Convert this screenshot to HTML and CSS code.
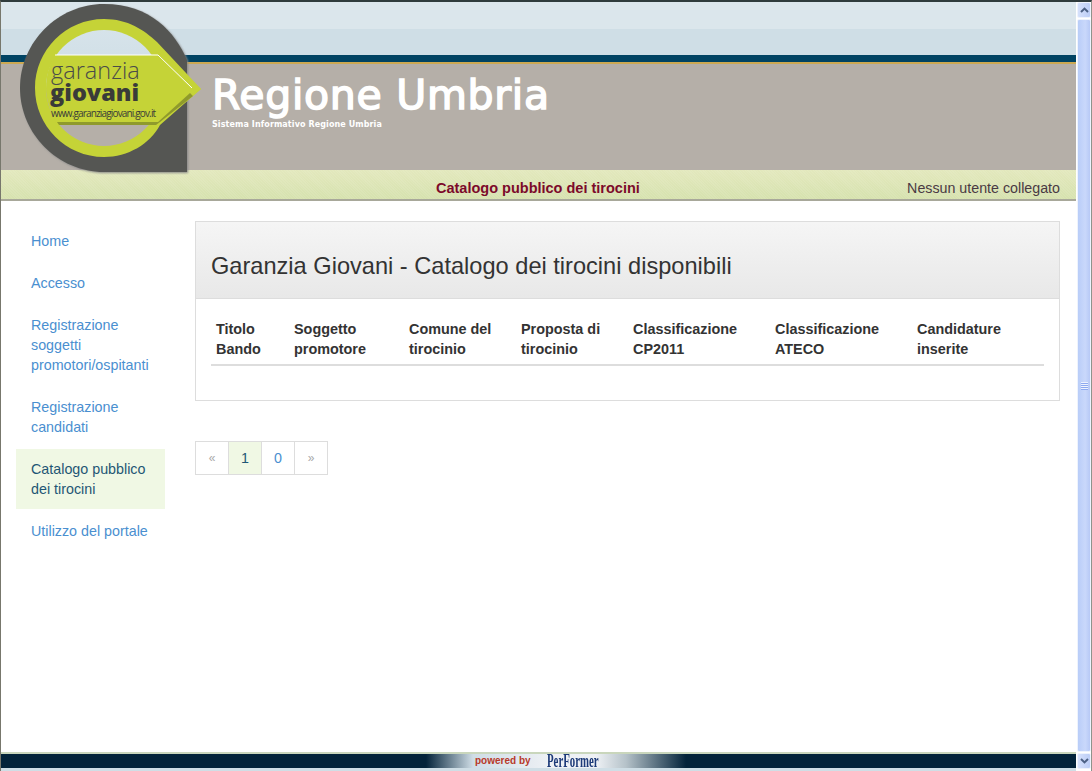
FILE: index.html
```html
<!DOCTYPE html>
<html lang="it">
<head>
  <meta charset="UTF-8">
  <title>Catalogo pubblico dei tirocini</title>
  <link rel="stylesheet" href="styles.css">
</head>
<body>
  <div class="window">
    <div class="page">
      <!-- Header -->
      <header class="site-header">
        <svg class="logo" viewBox="0 0 190 176" width="190" height="176">
          <defs>
            <filter id="soft" x="-10%" y="-10%" width="120%" height="120%">
              <feGaussianBlur stdDeviation="1.2"/>
            </filter>
            <linearGradient id="inner" x1="0" y1="0" x2="0" y2="1">
              <stop offset="0" stop-color="#d6e3ea"/>
              <stop offset="0.5" stop-color="#cddde5"/>
              <stop offset="0.5" stop-color="#b5afa8"/>
              <stop offset="1" stop-color="#b5afa8"/>
            </linearGradient>
          </defs>
          <path d="M84 4C130 4 155 32 167 60V172H84C38 172 0 134 0 88S38 4 84 4Z" fill="#888" filter="url(#soft)" transform="translate(1 1)"/>
          <path d="M84 4C130 4 155 32 167 60V172H84C38 172 0 134 0 88S38 4 84 4Z" fill="#555653"/>
          <path d="M84 19C108 19 124 30 137 42L181 89 140 125C130 144 108 157 84 157 46 157 15 126 15 88S46 19 84 19Z" fill="#c5d337"/>
          <circle cx="84" cy="88" r="58" fill="url(#inner)"/>
          <path d="M35 55H138L181 89 138 125H37C31 113 26 100 26 88 26 76 29 65 35 55Z" fill="#c5d337"/>
          <path d="M37 122H138L170 93 173 96 140 122 136 125H39Z" fill="#8f9a2c"/>
          <path d="M35 55H138L172 88" fill="none" stroke="#fff" stroke-width="1"/>
          <text class="logo-light" x="31" y="79">garanzia</text>
          <text class="logo-bold" x="30" y="101">giovani</text>
          <text class="logo-url" x="31" y="117">www.garanziagiovani.gov.it</text>
        </svg>
        <div class="band-light"></div>
        <div class="band-teal"></div>
        <div class="band-gold"></div>
        <div class="band-title">
          <h1 class="brand">Regione Umbria</h1>
          <p class="brand-sub">Sistema Informativo Regione Umbria</p>
        </div>
        <div class="status-bar">
          <span class="status-title">Catalogo pubblico dei tirocini</span>
          <span class="status-user">Nessun utente collegato</span>
        </div>
      </header>

      <!-- Main -->
      <main class="main">
        <ul class="side-nav">
          <li><a href="#">Home</a></li>
          <li><a href="#">Accesso</a></li>
          <li><a href="#">Registrazione soggetti promotori/ospitanti</a></li>
          <li><a href="#">Registrazione candidati</a></li>
          <li class="active"><a href="#">Catalogo pubblico dei tirocini</a></li>
          <li><a href="#">Utilizzo del portale</a></li>
        </ul>

        <div class="content">
          <section class="panel">
            <div class="panel-heading">
              <h2>Garanzia Giovani - Catalogo dei tirocini disponibili</h2>
            </div>
            <div class="panel-body">
              <table class="offers">
                <thead>
                  <tr>
                    <th>Titolo Bando</th>
                    <th>Soggetto promotore</th>
                    <th>Comune del tirocinio</th>
                    <th>Proposta di tirocinio</th>
                    <th>Classificazione CP2011</th>
                    <th>Classificazione ATECO</th>
                    <th>Candidature inserite</th>
                  </tr>
                </thead>
              </table>
            </div>
          </section>

          <ul class="pagination">
            <li class="muted"><a href="#">«</a></li>
            <li class="current"><a href="#">1</a></li>
            <li><a href="#">0</a></li>
            <li class="muted"><a href="#">»</a></li>
          </ul>
        </div>
      </main>

      <!-- Footer -->
      <footer class="site-footer">
        <div class="footer-strip">
          <span class="powered">powered by</span>
          <span class="performer">PerFormer</span>
        </div>
      </footer>
    </div>

    <!-- Scrollbar -->
    <div class="scrollbar">
      <div class="scroll-btn">
        <svg viewBox="0 0 9 6" width="9" height="6"><path d="M1 5 4.5 1.6 8 5" fill="none" stroke="#4d6185" stroke-width="2"/></svg>
      </div>
      <div class="scroll-thumb"><span class="grip"></span></div>
      <div class="scroll-btn">
        <svg viewBox="0 0 9 6" width="9" height="6"><path d="M1 1 4.5 4.4 8 1" fill="none" stroke="#4d6185" stroke-width="2"/></svg>
      </div>
    </div>
  </div>
</body>
</html>
```

FILE: styles.css
```css
/* Base reset */
* {
  margin: 0;
  padding: 0;
  box-sizing: border-box;
}
html, body {
  height: 100%;
  overflow: hidden;
}
body {
  font-family: 'Liberation Sans', Arial, sans-serif;
  font-size: 14.3px;
  line-height: 20px;
  color: #333;
  background: #fff;
}
a {
  text-decoration: none;
  color: inherit;
}
ul {
  list-style: none;
}

/* Window frame */
.window {
  display: flex;
  height: 771px;
  border-top: 2px solid #2f3b3c;
  border-left: 1px solid #77776c;
  border-right: 1px solid #8f938c;
}
.page {
  flex: 1;
  min-width: 0;
  display: flex;
  flex-direction: column;
}

/* Header */
.site-header {
  position: relative;
}
.logo {
  position: absolute;
  z-index: 1;
  left: 19px;
  top: -2px;
}
.logo-light {
  font-family: 'Open Sans', sans-serif;
  font-size: 23.5px;
  font-weight: 300;
  fill: #4b4c49;
}
.logo-bold {
  font-family: 'Open Sans', sans-serif;
  font-size: 23.5px;
  font-weight: 800;
  fill: #3a3b39;
}
.logo-url {
  font-family: 'Open Sans', sans-serif;
  font-size: 10px;
  letter-spacing: -0.85px;
  fill: #3a3b39;
}
.band-light {
  height: 53px;
  background: linear-gradient(#dbe6ec 0, #dbe6ec 27px, #cfdee6 27px);
}
.band-teal {
  height: 7px;
  background: #004363;
}
.band-gold {
  height: 2px;
  background: #cda952;
}
.band-title {
  height: 106px;
  padding: 8px 0 0 211px;
  background: #b5afa8;
  color: #fff;
}
.brand {
  font-family: 'DejaVu Sans', sans-serif;
  font-size: 41px;
  line-height: 46px;
  font-weight: 400;
  letter-spacing: 0.7px;
  -webkit-text-stroke: 1.5px #fff;
  white-space: nowrap;
}
.brand-sub {
  font-family: 'DejaVu Sans', sans-serif;
  font-size: 8px;
  line-height: 10px;
  font-weight: 700;
  margin-top: 2px;
  letter-spacing: 0.1px;
}
.status-bar {
  height: 31px;
  padding: 6px 16px 0 435px;
  display: flex;
  align-items: center;
  justify-content: space-between;
  background: repeating-linear-gradient(45deg, rgba(255, 255, 255, 0.08) 0 1px, transparent 1px 2px), linear-gradient(#e3e8bd, #d6e2ae);
  border-bottom: 2px solid #a8a89a;
}
.status-title {
  font-weight: 700;
  font-size: 14.5px;
  color: #7c0a2a;
}
.status-user {
  font-size: 14.25px;
  color: #4a3a44;
}

/* Main layout */
.main {
  flex: 1;
  display: flex;
  padding: 20px 16px 0 15px;
}
.side-nav {
  width: 149px;
  flex: none;
}
.side-nav li {
  margin-bottom: 2px;
}
.side-nav a {
  display: block;
  padding: 10px 15px;
  color: #4a8fd0;
}
.side-nav .active a {
  background: #f0f8e4;
  color: #1f5674;
}
.content {
  flex: 1;
  min-width: 0;
  margin-left: 30px;
}

/* Panel */
.panel {
  border: 1px solid #ddd;
}
.panel-heading {
  height: 77px;
  padding: 34px 15px 0;
  background: linear-gradient(#f5f5f5, #e8e8e8);
  border-bottom: 1px solid #ddd;
}
.panel-heading h2 {
  font-size: 23.6px;
  line-height: 20px;
  font-weight: 400;
}
.panel-body {
  padding: 15px;
}
.offers {
  width: 100%;
  table-layout: fixed;
  border-collapse: collapse;
  margin-bottom: 19px;
}
.offers th {
  padding: 5px;
  font-size: 14.4px;
  text-align: left;
  vertical-align: bottom;
  border-bottom: 2px solid #ddd;
  color: #333;
}
.offers th:nth-child(1) { width: 78px; }
.offers th:nth-child(2) { width: 115px; }
.offers th:nth-child(3) { width: 112px; }
.offers th:nth-child(4) { width: 112px; }
.offers th:nth-child(5) { width: 142px; }
.offers th:nth-child(6) { width: 142px; }

/* Pagination */
.pagination {
  display: flex;
  margin-top: 40px;
}
.pagination li {
  width: 33px;
}
.pagination a {
  display: block;
  width: 34px;
  height: 34px;
  border: 1px solid #ddd;
  line-height: 32px;
  text-align: center;
  color: #4a8fd0;
  background: #fff;
}
.pagination .current a {
  background: #f0f8e4;
  color: #1f5674;
}
.pagination .muted a {
  color: #a9a9a9;
  font-size: 12px;
}

/* Footer */
.site-footer {
  height: 19px;
  border-top: 2px solid #c9d6bc;
  background: #cfdee6;
}
.footer-strip {
  height: 14px;
  display: flex;
  align-items: center;
  padding-left: 474px;
  background: linear-gradient(90deg, #03233a 0, #03233a 425px, #cfdde6 472px, #eef1f5 550px, #eef1f5 595px, #b5c2c9 625px, #03233a 685px);
}
.powered {
  font-size: 10px;
  font-weight: 700;
  color: #b8392a;
}
.performer {
  margin-left: 16px;
  font-family: 'Liberation Serif', serif;
  font-size: 18px;
  line-height: 14px;
  font-weight: 700;
  color: #1c3a78;
  transform: scaleX(0.6);
  transform-origin: left center;
}

/* Scrollbar */
.scrollbar {
  width: 14px;
  margin-left: 1px;
  flex: none;
  display: flex;
  flex-direction: column;
  gap: 1px;
  padding-bottom: 2px;
  background: #fff;
}
.scroll-btn {
  height: 16px;
  display: flex;
  align-items: center;
  justify-content: center;
  border: 1px solid #eef3fd;
  border-radius: 2px;
  background: linear-gradient(90deg, #d6e1fb, #bccdf6);
}
.scroll-thumb {
  flex: 1;
  display: flex;
  align-items: center;
  justify-content: center;
  border: 1px solid #eef3fd;
  border-radius: 2px;
  background: linear-gradient(90deg, #b9cdf8, #c9d8fb 60%, #b7c9f6);
}
.grip {
  width: 7px;
  height: 8px;
  background: repeating-linear-gradient(#eef3fe 0 1px, #8eaaf0 1px 2px);
}
```
